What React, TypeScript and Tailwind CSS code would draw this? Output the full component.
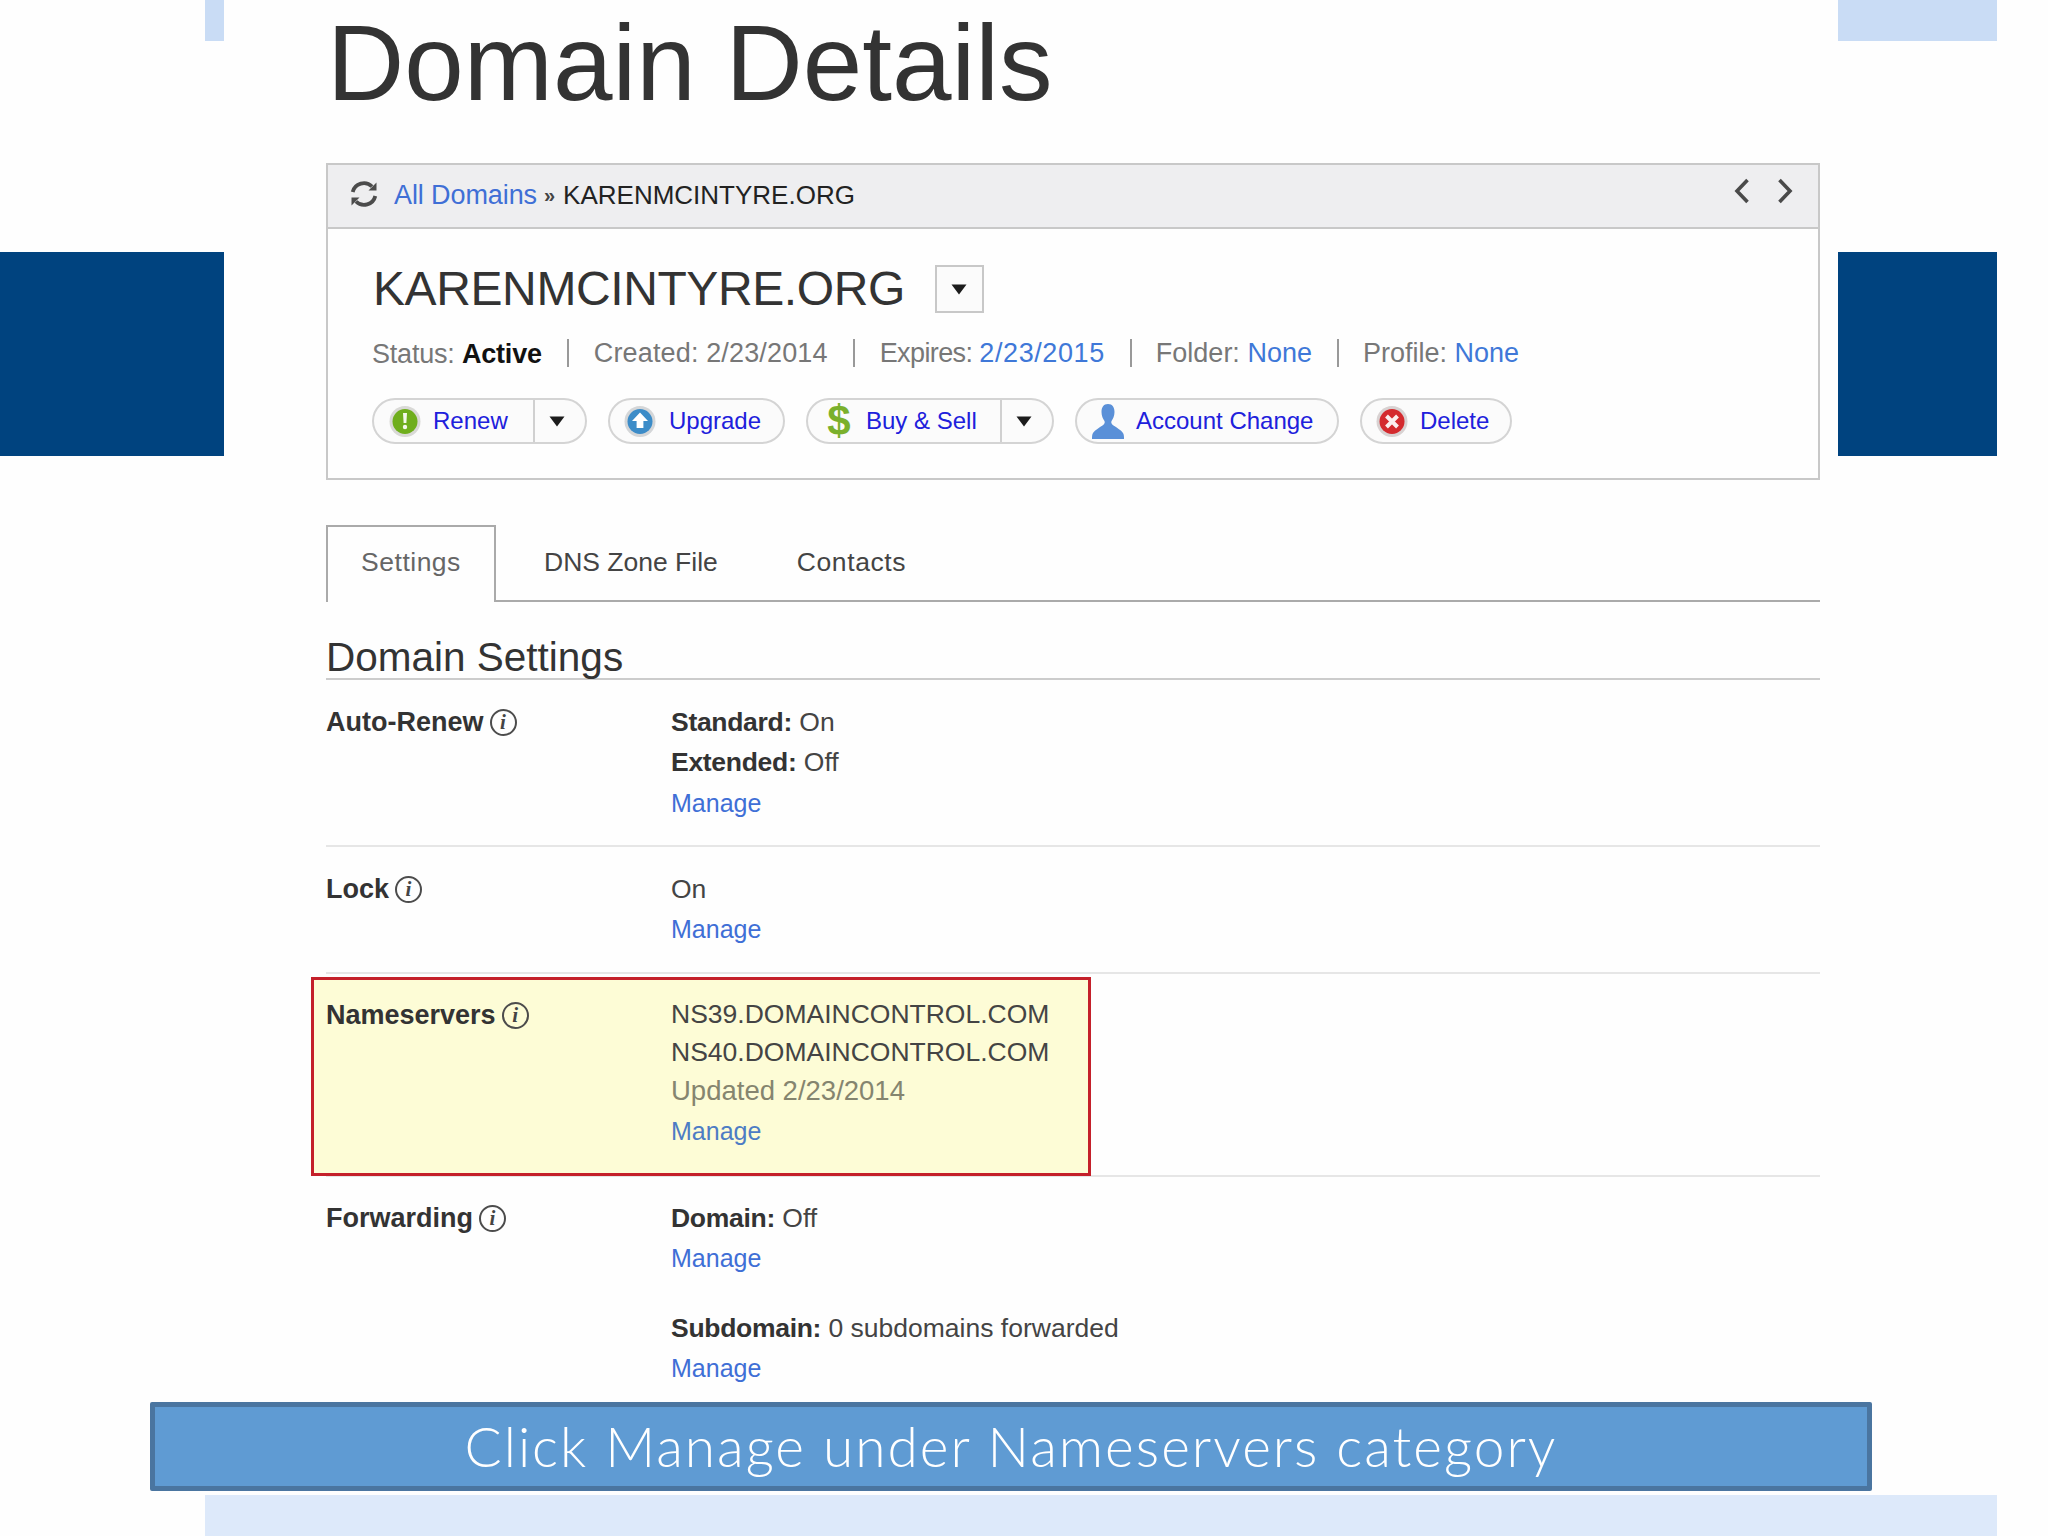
import React from "react";

function Caret({ className = "" }: { className?: string }) {
  return (
    <svg width="16" height="11" viewBox="0 0 16 11" className={className}>
      <path d="M0.5 0.5h15L8 10.5z" fill="#1c1c1c" />
    </svg>
  );
}

function RefreshIcon() {
  return (
    <svg width="28" height="28" viewBox="0 0 28 28" fill="none" className="mb-[4px]">
      <path d="M22 6.500A11.500 11.500 0 0 0 2.700 12" stroke="#4c4c4c" strokeWidth="3.800" />
      <path d="M6 21.500A11.500 11.500 0 0 0 25.300 16" stroke="#4c4c4c" strokeWidth="3.800" />
      <path d="M26.500 2.500v8h-8z" fill="#4c4c4c" />
      <path d="M1.500 25.500v-8h8z" fill="#4c4c4c" />
    </svg>
  );
}

function Chevron({ right }: { right?: boolean }) {
  return (
    <svg width="16" height="26" viewBox="0 0 16 26" fill="none">
      <path d={right ? "M2.500 2l10.500 11L2.500 24" : "M13.500 2L3 13l10.500 11"} stroke="#4a4a4a" strokeWidth="3.600" />
    </svg>
  );
}

function RenewIcon() {
  return (
    <svg width="32" height="33" viewBox="0 0 32 33">
      <circle cx="16" cy="16.500" r="15.500" fill="#d9d9d6" />
      <circle cx="16" cy="16.500" r="12.500" fill="#6fae1c" />
      <path d="M14 8h4l-.6 10h-2.800z" fill="#f4f8ea" />
      <circle cx="16" cy="22" r="2.200" fill="#f4f8ea" />
    </svg>
  );
}

function UpgradeIcon() {
  return (
    <svg width="32" height="33" viewBox="0 0 32 33">
      <circle cx="16" cy="16.500" r="15.500" fill="#d4d6d8" />
      <circle cx="16" cy="16.500" r="12.500" fill="#3c8cc8" />
      <path d="M16 7.500l8 8.500h-4.600v7h-6.800v-7H8z" fill="#fff" />
    </svg>
  );
}

function AccountIcon() {
  return (
    <svg width="34" height="35" viewBox="0 0 34 35">
      <path
        d="M17 0c4.500 0 6.500 3.500 6.500 8 0 4-1.500 7-3 9-.7 1.500 0 3 2 4.500 3 2 7.500 4.500 9.500 7.500 1 1.500 1 4 1 6H1c0-2 0-4.500 1-6 2-3 6.500-5.500 9.500-7.500 2-1.500 2.700-3 2-4.500-1.500-2-3-5-3-9C10.500 3.500 12.500 0 17 0z"
        fill="#5a90d8"
      />
    </svg>
  );
}

function DeleteIcon() {
  return (
    <svg width="32" height="33" viewBox="0 0 32 33">
      <circle cx="16" cy="16.500" r="15.500" fill="#d8d2d2" />
      <circle cx="16" cy="16.500" r="12.500" fill="#d42a2e" />
      <path d="M10.500 11l11 11M21.500 11l-11 11" stroke="#fbeeee" strokeWidth="4" />
    </svg>
  );
}

function InfoDot() {
  return (
    <span className="ml-[6px] inline-flex h-[27px] w-[27px] shrink-0 items-center justify-center rounded-full border-[2.5px] border-[#4c4c4c] font-['Liberation_Serif',serif] text-[21px] font-bold italic leading-none text-[#444]">
      i
    </span>
  );
}

function Label({ children }: { children: React.ReactNode }) {
  return (
    <div className="flex h-[40px] w-[345px] shrink-0 items-center text-[27px] font-bold text-[#333]">
      {children}
      <InfoDot />
    </div>
  );
}

function Manage() {
  return <div className="h-[40px] text-[25px] leading-[40px] text-[#3f6fd6]">Manage</div>;
}

function Line({ bold, children }: { bold?: string; children?: React.ReactNode }) {
  return (
    <div className="h-[40px] text-[26.5px] leading-[40px] text-[#444]">
      {bold && <b className="tracking-[-0.3px] text-[#333]">{bold}</b>} {children}
    </div>
  );
}

function Sep() {
  return <span className="h-[28px] w-[2px] bg-[#999]" />;
}

function Pill({
  width,
  pad,
  gap,
  icon,
  label,
  mainWidth,
}: {
  width: string;
  pad: string;
  gap: string;
  icon: React.ReactNode;
  label: string;
  mainWidth?: string;
}) {
  return (
    <div
      className={`flex h-[46px] items-center rounded-full border-2 border-[#d4d4d4] bg-[#fbfbfb] ${width}`}
    >
      <div className={`flex h-full items-center ${pad} ${gap} ${mainWidth ?? ""}`}>
        {icon}
        <span className="text-[24px] text-[#2020dc]">{label}</span>
      </div>
      {mainWidth && (
        <div className="flex h-full flex-1 items-center justify-center border-l-2 border-[#d0d0d0] pr-[6px]">
          <Caret />
        </div>
      )}
    </div>
  );
}

export default function App() {
  return (
    <div className="h-[1536px] w-[2048px] overflow-hidden bg-[#fefefe] font-['Liberation_Sans',Arial,sans-serif]">
      <div className="flex h-[1402px]">
        {/* left slide decoration */}
        <div className="w-[224px] shrink-0">
          <div className="ml-[205px] h-[41px] w-[19px] bg-[#c9dcf5]" />
          <div className="mt-[211px] h-[204px] w-[224px] bg-[#00437f]" />
        </div>

        {/* page */}
        <div className="w-[1614px] shrink-0 pl-[102px] pr-[18px]">
          <h1 className="h-[106px] pl-[1px] pt-[10px] text-[107px] font-normal leading-[106px] text-[#333]">Domain Details</h1>
          <div className="h-[9px]" />

          <div className="mt-[48px] h-[317px] border-2 border-[#c8c8c8]">
            <div className="flex h-[64px] items-center border-b-2 border-[#c8c8c8] bg-[#eeeef0] pl-[22px] pr-[25px]">
              <RefreshIcon />
              <span className="ml-[16px] flex items-center pb-[2px] text-[26px] text-[#222]">
                <span className="text-[27px] tracking-[-0.1px] text-[#3f6fd6]">All Domains</span>
                <span className="ml-[7px] mr-[8px] text-[20px] font-bold text-[#444]">»</span>
                <span>KARENMCINTYRE.ORG</span>
              </span>
              <div className="ml-auto flex gap-[27px] pb-[11px]">
                <Chevron />
                <Chevron right />
              </div>
            </div>

            <div className="pl-[44px] pt-[36px]">
              <div className="flex items-start">
                <h2 className="pl-[1px] text-[48px] font-normal leading-[48px] tracking-[-0.4px] text-[#333]">KARENMCINTYRE.ORG</h2>
                <div className="ml-[30px] flex h-[48px] w-[49px] items-center justify-center border-2 border-[#c8c8c8] bg-[#fbfbfb]">
                  <Caret />
                </div>
              </div>

              <div className="mt-[25px] flex h-[30px] items-center gap-[25px] text-[27px] text-[#777]">
                <span className="mt-[2px] tracking-[-0.2px]">
                  Status: <b className="text-[#111]">Active</b>
                </span>
                <Sep />
                <span className="tracking-[0.15px]">Created: 2/23/2014</span>
                <Sep />
                <span>
                  <span className="tracking-[-0.6px]">Expires: </span>
                  <span className="tracking-[0.6px] text-[#3f78d8]">2/23/2015</span>
                </span>
                <Sep />
                <span className="-ml-[1px]">
                  Folder: <span className="text-[#3f78d8]">None</span>
                </span>
                <Sep />
                <span className="-ml-[1px]">
                  Profile: <span className="text-[#3f78d8]">None</span>
                </span>
              </div>

              <div className="mt-[30px] flex gap-[21px]">
                <Pill width="w-[215px]" mainWidth="w-[159px]" pad="pl-[15px]" gap="gap-[12px]" icon={<RenewIcon />} label="Renew" />
                <Pill width="w-[177px]" pad="pl-[14px]" gap="gap-[13px]" icon={<UpgradeIcon />} label="Upgrade" />
                <Pill
                  width="w-[248px]"
                  mainWidth="w-[192px]"
                  pad="pl-[19px]"
                  gap="gap-[15px]"
                  icon={<span className="w-[24px] text-center text-[42px] font-bold leading-none text-[#7ab02c]">$</span>}
                  label="Buy & Sell"
                />
                <Pill width="w-[264px]" pad="pl-[14px]" gap="gap-[11px]" icon={<AccountIcon />} label="Account Change" />
                <Pill width="w-[152px]" pad="pl-[14px]" gap="gap-[12px]" icon={<DeleteIcon />} label="Delete" />
              </div>
            </div>
          </div>

          {/* tabs */}
          <div className="mt-[45px] flex h-[77px] items-center border-b-2 border-[#aaa] text-[26.5px] text-[#444]">
            <div className="-mb-[2px] flex h-[77px] w-[170px] items-center justify-center border-2 border-b-0 border-[#aaa] bg-[#fefefe] pb-[3px] tracking-[0.5px] text-[#666]">
              Settings
            </div>
            <span className="ml-[48px]">DNS Zone File</span>
            <span className="ml-[79px] tracking-[0.6px]">Contacts</span>
          </div>

          <div className="h-[78px] border-b-2 border-[#ccc] pt-[35px] text-[40.5px] leading-[40px] text-[#333]">Domain Settings</div>

          <div className="flex h-[167px] border-b-2 border-[#e6e6e6] pt-[22px]">
            <Label>Auto-Renew</Label>
            <div>
              <Line bold="Standard:">On</Line>
              <Line bold="Extended:">Off</Line>
              <div className="pt-[1px]">
                <Manage />
              </div>
            </div>
          </div>

          <div className="flex h-[127px] border-b-2 border-[#e6e6e6] pt-[22px]">
            <Label>Lock</Label>
            <div>
              <Line>On</Line>
              <Manage />
            </div>
          </div>

          <div className="h-[203px] border-b-2 border-[#e6e6e6] pt-[3px]">
            <div className="-ml-[15px] flex h-[199px] w-[780px] border-[3px] border-[#c4202a] bg-[#fdfcd6] pl-[12px] pt-[15px]">
              <Label>Nameservers</Label>
              <div>
                <div className="h-[38px] text-[26.5px] leading-[38px] text-[#444]">NS39.DOMAINCONTROL.COM</div>
                <div className="h-[38px] text-[26.5px] leading-[38px] text-[#444]">NS40.DOMAINCONTROL.COM</div>
                <div className="h-[40px] text-[27.5px] leading-[40px] text-[#85856f]">Updated 2/23/2014</div>
                <div className="h-[40px] text-[25px] leading-[40px] text-[#4d7cc4]">Manage</div>
              </div>
            </div>
          </div>

          <div className="flex pt-[21px]">
            <Label>Forwarding</Label>
            <div>
              <Line bold="Domain:">Off</Line>
              <Manage />
              <div className="mt-[30px]">
                <Line bold="Subdomain:">0 subdomains forwarded</Line>
                <Manage />
              </div>
            </div>
          </div>
        </div>

        {/* right slide decoration */}
        <div className="w-[159px] shrink-0">
          <div className="h-[41px] bg-[#c9dcf5]" />
          <div className="mt-[211px] h-[204px] bg-[#00437f]" />
        </div>
      </div>

      <div className="ml-[150px] flex h-[89px] w-[1722px] items-center justify-center rounded-[2px] border-[5px] border-[#4a75a0] bg-[#5f9bd3] font-['Lato',sans-serif] text-[55px] font-light tracking-[2px] text-white">
        Click Manage under Nameservers category
      </div>
      <div className="ml-[205px] mt-[4px] h-[41px] w-[1792px] bg-[#dde9fa]" />
    </div>
  );
}
